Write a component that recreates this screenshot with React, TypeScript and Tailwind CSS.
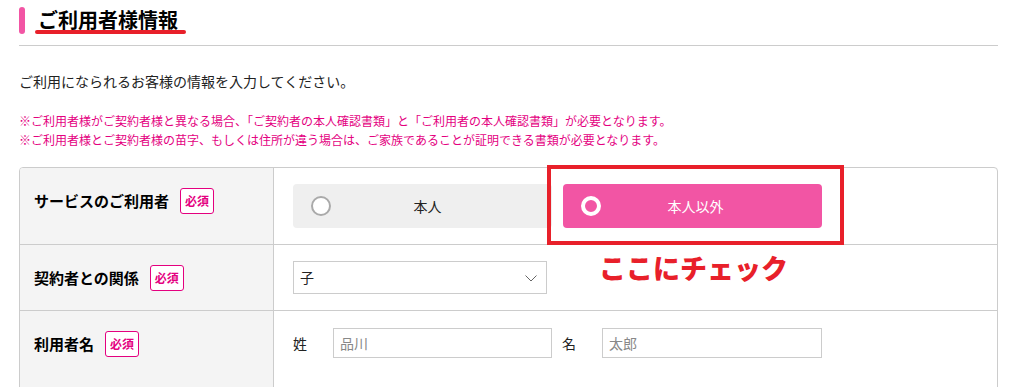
import React from 'react';

const Badge = () => (
  <span className="flex h-[26px] w-[34px] shrink-0 items-center justify-center rounded-[3px] border border-[#e4007f] bg-white text-[12px] font-bold text-[#e4007f]">
    必須
  </span>
);

const Label = ({ text }: { text: string }) => (
  <div className="flex items-start gap-[11px] border-r border-[#ccc] bg-[#f4f4f4] pl-[14px] pt-[20px]">
    <span className="flex h-[26px] items-center text-[15px] font-bold text-black">{text}</span>
    <Badge />
  </div>
);

export default function App() {
  return (
    <div
      className="relative w-[1016px] bg-white text-[#222]"
      style={{ fontFamily: '"Noto Sans CJK JP", "Noto Sans", sans-serif' }}
    >
      <div className="ml-[19px] w-[979px]">
        {/* 見出し */}
        <div className="flex h-[46px] items-start border-b border-[#ccc] pt-[7px]">
          <span className="h-[27px] w-[6px] rounded-[3px] bg-[#f255a4]" />
          <h2 className="ml-[13px] text-[20px] font-bold leading-[26px] text-black">ご利用者様情報</h2>
        </div>

        <p className="mt-[25px] text-[14px] leading-[21px]">ご利用になられるお客様の情報を入力してください。</p>

        <div className="mt-[19px] text-[12px] leading-[19px] text-[#e4007f]">
          <p>※ご利用者様がご契約者様と異なる場合、「ご契約者の本人確認書類」と「ご利用者の本人確認書類」が必要となります。</p>
          <p>※ご利用者様とご契約者様の苗字、もしくは住所が違う場合は、ご家族であることが証明できる書類が必要となります。</p>
        </div>

        <div className="mt-[18px] grid grid-cols-[254px_1fr] overflow-hidden rounded-t-[4px] border border-[#ccc]">
          {/* サービスのご利用者 */}
          <Label text="サービスのご利用者" />
          <div className="flex gap-[11px] pb-[16px] pl-[19px] pt-[16px]">
            <div className="relative flex h-[44px] w-[259px] items-center justify-center rounded-[4px] bg-[#efefef] pl-[10px] text-[14px] text-[#222]">
              <span className="absolute left-[18px] top-[12px] h-[20px] w-[20px] rounded-full border-2 border-[#aaa] bg-white" />
              本人
            </div>
            <div className="relative flex h-[44px] w-[259px] items-center justify-center rounded-[4px] bg-[#f255a4] pl-[6px] text-[14px] text-white">
              <span className="absolute left-[18px] top-[12px] h-[20px] w-[20px] rounded-full border-[4px] border-white" />
              本人以外
            </div>
          </div>

          {/* 契約者との関係 */}
          <div className="col-span-2 grid grid-cols-[254px_1fr] border-t border-[#ccc]">
            <Label text="契約者との関係" />
            <div className="pb-[16px] pl-[19px] pt-[16px]">
              <div className="relative flex h-[33px] w-[254px] items-center border border-[#ccc] bg-white pl-[6px] text-[14px] text-[#222]">
                子
                <svg className="absolute right-[9px] top-[13px]" width="12" height="7" viewBox="0 0 12 7" fill="none">
                  <path d="M0.5 0.5L6 6L11.5 0.5" stroke="#666" strokeWidth="1" />
                </svg>
              </div>
            </div>
          </div>

          {/* 利用者名 */}
          <div className="col-span-2 grid grid-cols-[254px_1fr] border-t border-[#ccc]">
            <Label text="利用者名" />
            <div className="flex items-center pb-[40px] pl-[19px] pt-[17px] text-[14px]">
              <span>姓</span>
              <div className="ml-[26px] flex h-[30px] w-[219px] items-center border border-[#ccc] pl-[6px] text-[#888]">品川</div>
              <span className="ml-[10px]">名</span>
              <div className="ml-[26px] flex h-[30px] w-[220px] items-center border border-[#ccc] pl-[6px] text-[#888]">太郎</div>
            </div>
          </div>
        </div>
      </div>

      {/* 注釈 */}
      <span className="absolute left-[35px] top-[30px] h-[4px] w-[151px] rounded-full bg-[#e8202a]" />
      <div className="absolute left-[547px] top-[165px] h-[80px] w-[297px] border-4 border-[#e8202a]" />
      <span className="absolute left-[599px] top-[250px] text-[27px] font-black leading-[36px] text-[#e8202a]">ここにチェック</span>
    </div>
  );
}
